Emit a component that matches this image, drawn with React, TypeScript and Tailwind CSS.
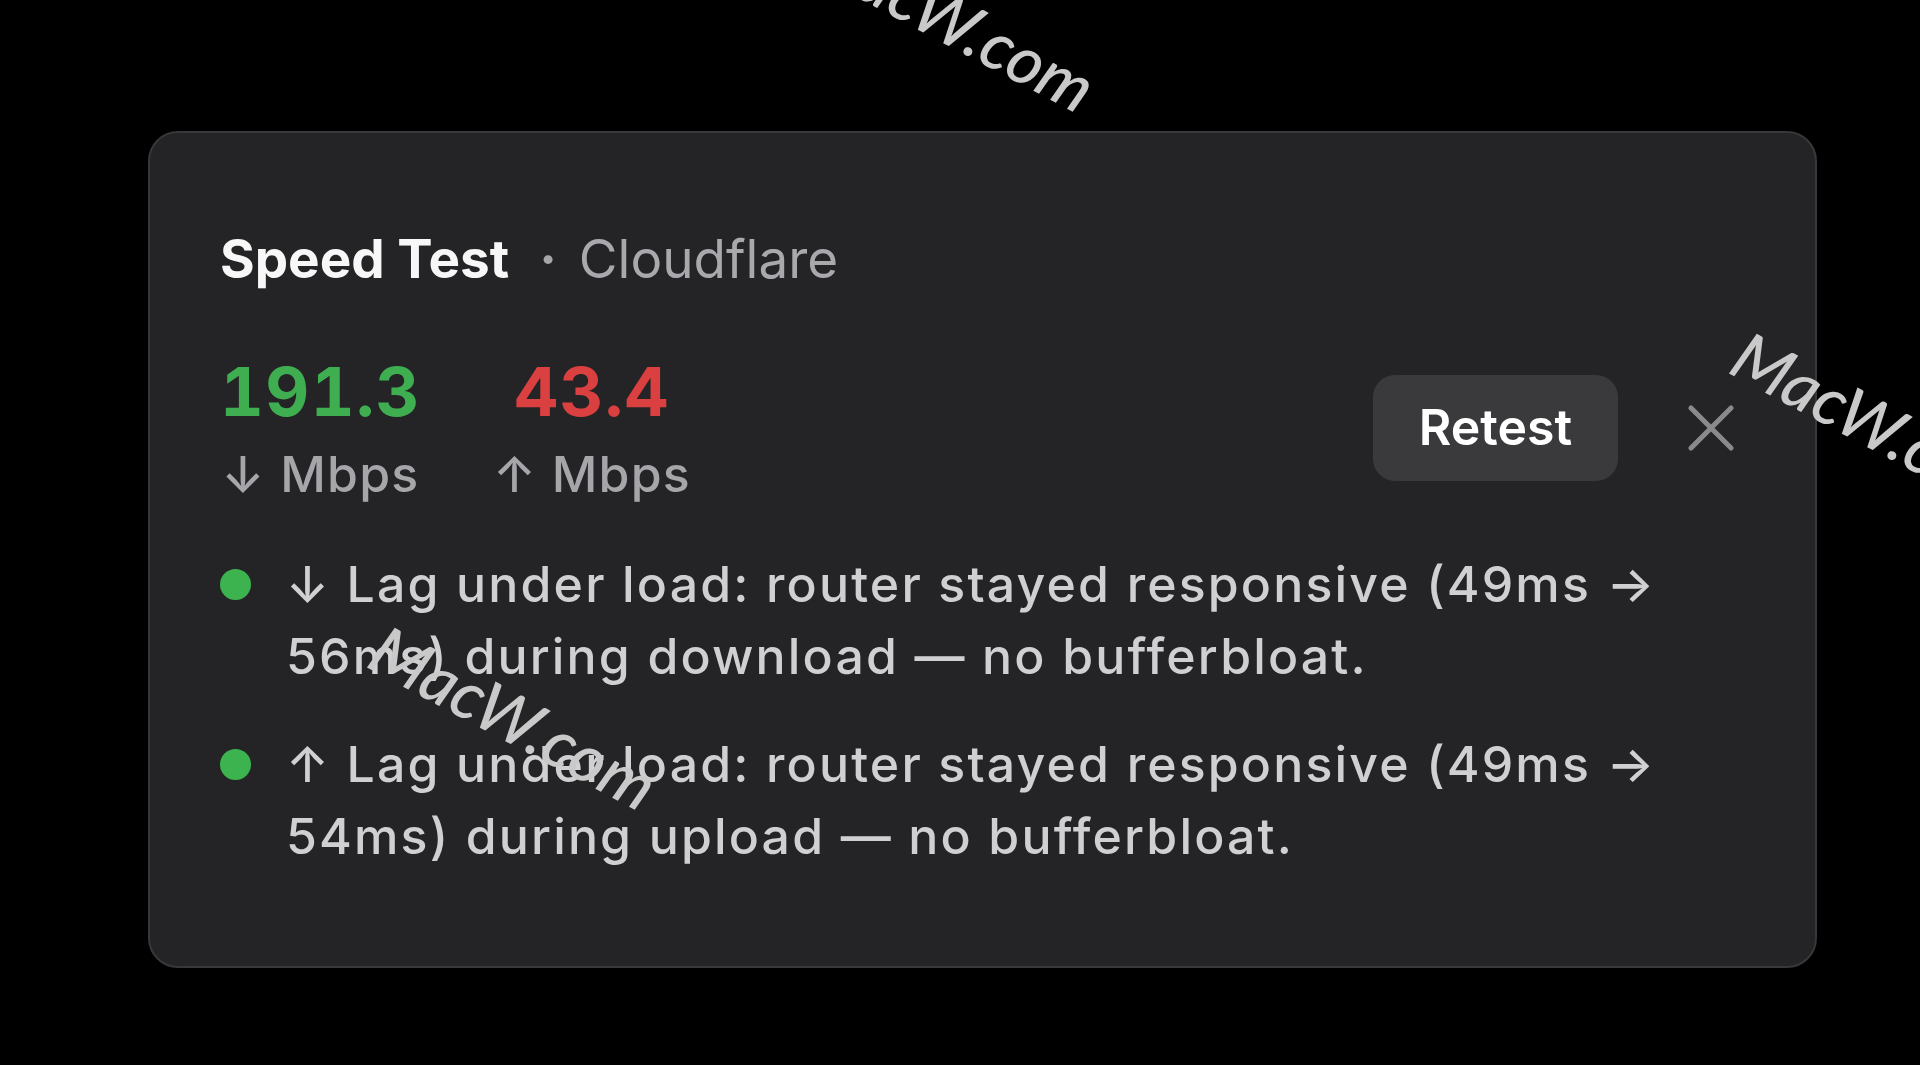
import React from "react";

function CloseIcon() {
  return (
    <svg width="46" height="46" viewBox="0 0 46 46" fill="none">
      <path d="M3 3L43 43M43 3L3 43" stroke="#8a8a8e" strokeWidth="5" strokeLinecap="round" />
    </svg>
  );
}

function Stat({ value, color, arrow }: { value: string; color: string; arrow: string }) {
  return (
    <div className="flex flex-col items-center">
      <div className={`text-[68px] leading-[76px] font-bold tabular-nums tracking-[0.02em] ${color}`}>{value}</div>
      <div className="mt-[17px] text-[50px] leading-[56px] font-medium text-[#a6a6aa] whitespace-nowrap tracking-[0.025em]">
        {arrow} Mbps
      </div>
    </div>
  );
}

function Bullet({ line1, line2 }: { line1: string; line2: string }) {
  return (
    <div className="flex items-start gap-[35px]">
      <div className="h-[72px] flex items-center">
        <div className="w-[31px] h-[31px] rounded-full bg-[#3cb34f]" />
      </div>
      <div className="text-[50px] leading-[72px] font-medium text-[#d0d0d2] whitespace-nowrap tracking-[0.043em]">
        <div>{line1}</div>
        <div>{line2}</div>
      </div>
    </div>
  );
}

function Watermark({ className }: { className: string }) {
  return (
    <span
      className={`absolute whitespace-nowrap text-[67px] leading-none italic font-medium text-[#c9c9c9] origin-top-left rotate-[28deg] pointer-events-none ${className}`}
      style={{ fontFamily: "Lato, 'DejaVu Sans', sans-serif" }}
    >
      MacW.com
    </span>
  );
}

export default function App() {
  return (
    <div
      className="relative w-[1920px] h-[1065px] bg-black overflow-hidden"
      style={{ fontFamily: "Inter, 'DejaVu Sans', sans-serif" }}
    >
      <div className="pt-[131px] pl-[148px]">
        <div className="w-[1669px] rounded-[30px] border-2 border-[#38383b] bg-[#242426] pt-[94px] pb-[94px] pl-[70px] pr-[81px]">
          <div className="flex items-baseline text-[53px] leading-[64px]">
            <span className="font-bold text-[#f7f7f8]">Speed Test</span>
            <span className="ml-[30px] font-bold text-[#a6a6aa]">·</span>
            <span className="ml-[22px] font-normal text-[#a9a9ad]">Cloudflare</span>
          </div>

          <div className="mt-[62px] flex items-center justify-between">
            <div className="flex gap-[72px]">
              <Stat value="191.3" color="text-[#3fae50]" arrow="↓" />
              <Stat value="43.4" color="text-[#d9403f]" arrow="↑" />
            </div>
            <div className="flex items-center gap-[70px]">
              <button className="h-[106px] w-[245px] rounded-[22px] bg-[#3a3a3d] text-[50px] font-semibold text-white">
                Retest
              </button>
              <CloseIcon />
            </div>
          </div>

          <div className="mt-[46px] flex flex-col gap-[36px]">
            <Bullet
              line1="↓ Lag under load: router stayed responsive (49ms →"
              line2="56ms) during download — no bufferbloat."
            />
            <Bullet
              line1="↑ Lag under load: router stayed responsive (49ms →"
              line2="54ms) during upload — no bufferbloat."
            />
          </div>
        </div>
      </div>

      <Watermark className="left-[830px] top-[-84px]" />
      <Watermark className="left-[1754px] top-[320px]" />
      <Watermark className="left-[392px] top-[614px]" />
    </div>
  );
}
